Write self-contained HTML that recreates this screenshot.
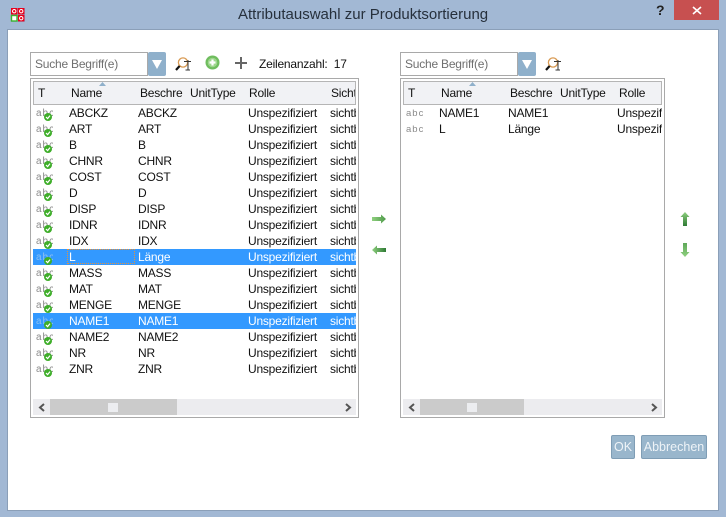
<!DOCTYPE html>
<html><head><meta charset="utf-8">
<style>
html,body{margin:0;padding:0}
body{width:726px;height:517px;position:relative;overflow:hidden;background:#a2b8d4;font-family:"Liberation Sans",sans-serif;font-size:12px;letter-spacing:-.22px;color:#111}
div,svg,span{position:absolute}
.abs{white-space:nowrap;line-height:16px}
.client{left:7px;top:29px;width:710px;height:480px;background:#fff;border:1px solid #8b9fb8}
.search{height:22px;width:116px;background:#fff;border:1px solid #a9a9a9;color:#6f6f6f;line-height:22px;text-indent:4px;top:52px}
.drop{top:52px;width:18px;height:24px;background:#8fb0cb;border-radius:2px}
.drop i{position:absolute;left:4px;top:8px;width:0;height:0;border-left:5.5px solid transparent;border-right:5.5px solid transparent;border-top:9px solid #fff}
.tbl{top:78px;height:338px;border:1px solid #a9a9a9;background:#fff;overflow:hidden}
.hdr{left:2px;top:2px;height:22px;background:#f1f2f5;border:1px solid #b5b5b5}
.h{top:3px;line-height:16px;white-space:nowrap;color:#111}
.row{left:2px;height:16px;overflow:hidden}
.sel{background:#3399ff;color:#fff}
.c{top:0;line-height:16px;white-space:nowrap}
.sb{left:2px;top:320px;height:16px;background:#ececef}
.thumb{top:0;height:16px;background:#cbcbcb}
.grip{top:4px;width:10px;height:9px;background:#ecedf0}
.btn{top:435px;height:22px;background:#99b6cc;border:1px solid #7f9db5;border-radius:2px;color:#eef3f7;text-align:center;line-height:22px;font-size:12.500px;letter-spacing:0}
.ic{left:3px;top:2px;width:17px;height:14px}
</style></head><body>

<svg style="left:10px;top:7px" width="16" height="16" viewBox="0 0 16 16"><rect x="1" y="1" width="14" height="14" fill="#6db1dc" opacity=".5"/><rect x="1" y="1" width="6.500" height="6.500" fill="#e8001c"/><rect x="8" y="1" width="6.500" height="6.500" fill="#e8001c"/><rect x="8" y="8" width="6.500" height="6.500" fill="#e8001c"/><rect x="1.500" y="8.500" width="5.500" height="5.500" fill="#fff" stroke="#3fb22c" stroke-width="1.400"/><circle cx="4.200" cy="4.200" r="1.700" fill="none" stroke="#fff"/><circle cx="11.200" cy="4.200" r="1.700" fill="none" stroke="#fff"/><circle cx="11.200" cy="11.200" r="1.700" fill="none" stroke="#fff"/></svg>
<div class="abs" style="left:238px;top:7px;font-size:15px;letter-spacing:0;color:#26303c">Attributauswahl zur Produktsortierung</div>
<div class="abs" style="left:656px;top:2px;font-size:14px;letter-spacing:0;font-weight:bold;color:#222">?</div>
<div style="left:674px;top:0;width:45px;height:20px;background:#c75050"></div>
<svg style="left:692px;top:6px" width="10" height="9"><path d="M1 1L9 8M9 1L1 8" stroke="#fff" stroke-width="1.600"/></svg>
<div class="client"></div>

<!-- left toolbar -->
<div class="search" style="left:30px">Suche Begriff(e)</div>
<div class="drop" style="left:148px"><i></i></div>
<svg style="left:175px;top:56px" width="17" height="16" viewBox="0 0 17 16"><circle cx="8" cy="6.500" r="4.600" fill="#fff" stroke="#d99a52" stroke-width="1.300"/><path d="M4.600 10L1 14" stroke="#111" stroke-width="2.200"/><path d="M9 5.500H16M13 4V14M10.500 14H15" stroke="#333" stroke-width="1" fill="none"/></svg>
<svg style="left:205px;top:55px" width="15" height="15" viewBox="0 0 15 15"><circle cx="7.500" cy="7.500" r="7" fill="#6fbd5e"/><circle cx="7.500" cy="7.500" r="4.800" fill="#9ed68d"/><path d="M7.500 4.500V10.500M4.500 7.500H10.500" stroke="#fff" stroke-width="2.200"/></svg>
<svg style="left:234px;top:56px" width="14" height="14"><path d="M7 1V13M1 7H13" stroke="#666" stroke-width="2"/></svg>
<div class="abs" style="left:259px;top:56px">Zeilenanzahl:&nbsp; 17</div>

<!-- left table -->
<div class="tbl" style="left:30px;width:327px">
<div class="hdr" style="width:321px">
<div class="h" style="left:4px">T</div><div class="h" style="left:37px">Name</div>
<svg style="left:65px;top:0" width="7" height="4"><path d="M0 4L3.500 0L7 4Z" fill="#8fb0cb"/></svg>
<div class="h" style="left:106px">Beschre</div><div class="h" style="left:156px">UnitType</div><div class="h" style="left:215px">Rolle</div>
<div class="h" style="left:297px;width:24px;overflow:hidden">Sichtbar</div>
</div>

<div class="row" style="top:26px;width:323px"><svg class="ic" viewBox="0 0 17 14"><text x="0" y="9" font-size="10" fill="#8a8a8a" font-family="Liberation Sans" letter-spacing="1">abc</text><circle cx="12" cy="10" r="4" fill="#3fae2a"/><path d="M10 10l1.600 1.600L14 8.600" stroke="#fff" fill="none" stroke-width="1.200"/></svg><div class="c" style="left:36px">ABCKZ</div><div class="c" style="left:105px">ABCKZ</div><div class="c" style="left:215px">Unspezifiziert</div><div class="c" style="left:297px;width:26px;overflow:hidden">sichtbar</div></div>
<div class="row" style="top:42px;width:323px"><svg class="ic" viewBox="0 0 17 14"><text x="0" y="9" font-size="10" fill="#8a8a8a" font-family="Liberation Sans" letter-spacing="1">abc</text><circle cx="12" cy="10" r="4" fill="#3fae2a"/><path d="M10 10l1.600 1.600L14 8.600" stroke="#fff" fill="none" stroke-width="1.200"/></svg><div class="c" style="left:36px">ART</div><div class="c" style="left:105px">ART</div><div class="c" style="left:215px">Unspezifiziert</div><div class="c" style="left:297px;width:26px;overflow:hidden">sichtbar</div></div>
<div class="row" style="top:58px;width:323px"><svg class="ic" viewBox="0 0 17 14"><text x="0" y="9" font-size="10" fill="#8a8a8a" font-family="Liberation Sans" letter-spacing="1">abc</text><circle cx="12" cy="10" r="4" fill="#3fae2a"/><path d="M10 10l1.600 1.600L14 8.600" stroke="#fff" fill="none" stroke-width="1.200"/></svg><div class="c" style="left:36px">B</div><div class="c" style="left:105px">B</div><div class="c" style="left:215px">Unspezifiziert</div><div class="c" style="left:297px;width:26px;overflow:hidden">sichtbar</div></div>
<div class="row" style="top:74px;width:323px"><svg class="ic" viewBox="0 0 17 14"><text x="0" y="9" font-size="10" fill="#8a8a8a" font-family="Liberation Sans" letter-spacing="1">abc</text><circle cx="12" cy="10" r="4" fill="#3fae2a"/><path d="M10 10l1.600 1.600L14 8.600" stroke="#fff" fill="none" stroke-width="1.200"/></svg><div class="c" style="left:36px">CHNR</div><div class="c" style="left:105px">CHNR</div><div class="c" style="left:215px">Unspezifiziert</div><div class="c" style="left:297px;width:26px;overflow:hidden">sichtbar</div></div>
<div class="row" style="top:90px;width:323px"><svg class="ic" viewBox="0 0 17 14"><text x="0" y="9" font-size="10" fill="#8a8a8a" font-family="Liberation Sans" letter-spacing="1">abc</text><circle cx="12" cy="10" r="4" fill="#3fae2a"/><path d="M10 10l1.600 1.600L14 8.600" stroke="#fff" fill="none" stroke-width="1.200"/></svg><div class="c" style="left:36px">COST</div><div class="c" style="left:105px">COST</div><div class="c" style="left:215px">Unspezifiziert</div><div class="c" style="left:297px;width:26px;overflow:hidden">sichtbar</div></div>
<div class="row" style="top:106px;width:323px"><svg class="ic" viewBox="0 0 17 14"><text x="0" y="9" font-size="10" fill="#8a8a8a" font-family="Liberation Sans" letter-spacing="1">abc</text><circle cx="12" cy="10" r="4" fill="#3fae2a"/><path d="M10 10l1.600 1.600L14 8.600" stroke="#fff" fill="none" stroke-width="1.200"/></svg><div class="c" style="left:36px">D</div><div class="c" style="left:105px">D</div><div class="c" style="left:215px">Unspezifiziert</div><div class="c" style="left:297px;width:26px;overflow:hidden">sichtbar</div></div>
<div class="row" style="top:122px;width:323px"><svg class="ic" viewBox="0 0 17 14"><text x="0" y="9" font-size="10" fill="#8a8a8a" font-family="Liberation Sans" letter-spacing="1">abc</text><circle cx="12" cy="10" r="4" fill="#3fae2a"/><path d="M10 10l1.600 1.600L14 8.600" stroke="#fff" fill="none" stroke-width="1.200"/></svg><div class="c" style="left:36px">DISP</div><div class="c" style="left:105px">DISP</div><div class="c" style="left:215px">Unspezifiziert</div><div class="c" style="left:297px;width:26px;overflow:hidden">sichtbar</div></div>
<div class="row" style="top:138px;width:323px"><svg class="ic" viewBox="0 0 17 14"><text x="0" y="9" font-size="10" fill="#8a8a8a" font-family="Liberation Sans" letter-spacing="1">abc</text><circle cx="12" cy="10" r="4" fill="#3fae2a"/><path d="M10 10l1.600 1.600L14 8.600" stroke="#fff" fill="none" stroke-width="1.200"/></svg><div class="c" style="left:36px">IDNR</div><div class="c" style="left:105px">IDNR</div><div class="c" style="left:215px">Unspezifiziert</div><div class="c" style="left:297px;width:26px;overflow:hidden">sichtbar</div></div>
<div class="row" style="top:154px;width:323px"><svg class="ic" viewBox="0 0 17 14"><text x="0" y="9" font-size="10" fill="#8a8a8a" font-family="Liberation Sans" letter-spacing="1">abc</text><circle cx="12" cy="10" r="4" fill="#3fae2a"/><path d="M10 10l1.600 1.600L14 8.600" stroke="#fff" fill="none" stroke-width="1.200"/></svg><div class="c" style="left:36px">IDX</div><div class="c" style="left:105px">IDX</div><div class="c" style="left:215px">Unspezifiziert</div><div class="c" style="left:297px;width:26px;overflow:hidden">sichtbar</div></div>
<div class="row sel" style="top:170px;width:323px"><svg class="ic" viewBox="0 0 17 14"><text x="0" y="9" font-size="10" fill="#8cc0f0" font-family="Liberation Sans" letter-spacing="1">abc</text><circle cx="12" cy="10" r="4" fill="#3fae2a"/><path d="M10 10l1.600 1.600L14 8.600" stroke="#fff" fill="none" stroke-width="1.200"/></svg><div style="left:34px;top:0;width:66px;height:13px;border:1px dotted #e8923a"></div><div class="c" style="left:36px">L</div><div class="c" style="left:105px">Länge</div><div class="c" style="left:215px">Unspezifiziert</div><div class="c" style="left:297px;width:26px;overflow:hidden">sichtbar</div></div>
<div class="row" style="top:186px;width:323px"><svg class="ic" viewBox="0 0 17 14"><text x="0" y="9" font-size="10" fill="#8a8a8a" font-family="Liberation Sans" letter-spacing="1">abc</text><circle cx="12" cy="10" r="4" fill="#3fae2a"/><path d="M10 10l1.600 1.600L14 8.600" stroke="#fff" fill="none" stroke-width="1.200"/></svg><div class="c" style="left:36px">MASS</div><div class="c" style="left:105px">MASS</div><div class="c" style="left:215px">Unspezifiziert</div><div class="c" style="left:297px;width:26px;overflow:hidden">sichtbar</div></div>
<div class="row" style="top:202px;width:323px"><svg class="ic" viewBox="0 0 17 14"><text x="0" y="9" font-size="10" fill="#8a8a8a" font-family="Liberation Sans" letter-spacing="1">abc</text><circle cx="12" cy="10" r="4" fill="#3fae2a"/><path d="M10 10l1.600 1.600L14 8.600" stroke="#fff" fill="none" stroke-width="1.200"/></svg><div class="c" style="left:36px">MAT</div><div class="c" style="left:105px">MAT</div><div class="c" style="left:215px">Unspezifiziert</div><div class="c" style="left:297px;width:26px;overflow:hidden">sichtbar</div></div>
<div class="row" style="top:218px;width:323px"><svg class="ic" viewBox="0 0 17 14"><text x="0" y="9" font-size="10" fill="#8a8a8a" font-family="Liberation Sans" letter-spacing="1">abc</text><circle cx="12" cy="10" r="4" fill="#3fae2a"/><path d="M10 10l1.600 1.600L14 8.600" stroke="#fff" fill="none" stroke-width="1.200"/></svg><div class="c" style="left:36px">MENGE</div><div class="c" style="left:105px">MENGE</div><div class="c" style="left:215px">Unspezifiziert</div><div class="c" style="left:297px;width:26px;overflow:hidden">sichtbar</div></div>
<div class="row sel" style="top:234px;width:323px"><svg class="ic" viewBox="0 0 17 14"><text x="0" y="9" font-size="10" fill="#8cc0f0" font-family="Liberation Sans" letter-spacing="1">abc</text><circle cx="12" cy="10" r="4" fill="#3fae2a"/><path d="M10 10l1.600 1.600L14 8.600" stroke="#fff" fill="none" stroke-width="1.200"/></svg><div class="c" style="left:36px">NAME1</div><div class="c" style="left:105px">NAME1</div><div class="c" style="left:215px">Unspezifiziert</div><div class="c" style="left:297px;width:26px;overflow:hidden">sichtbar</div></div>
<div class="row" style="top:250px;width:323px"><svg class="ic" viewBox="0 0 17 14"><text x="0" y="9" font-size="10" fill="#8a8a8a" font-family="Liberation Sans" letter-spacing="1">abc</text><circle cx="12" cy="10" r="4" fill="#3fae2a"/><path d="M10 10l1.600 1.600L14 8.600" stroke="#fff" fill="none" stroke-width="1.200"/></svg><div class="c" style="left:36px">NAME2</div><div class="c" style="left:105px">NAME2</div><div class="c" style="left:215px">Unspezifiziert</div><div class="c" style="left:297px;width:26px;overflow:hidden">sichtbar</div></div>
<div class="row" style="top:266px;width:323px"><svg class="ic" viewBox="0 0 17 14"><text x="0" y="9" font-size="10" fill="#8a8a8a" font-family="Liberation Sans" letter-spacing="1">abc</text><circle cx="12" cy="10" r="4" fill="#3fae2a"/><path d="M10 10l1.600 1.600L14 8.600" stroke="#fff" fill="none" stroke-width="1.200"/></svg><div class="c" style="left:36px">NR</div><div class="c" style="left:105px">NR</div><div class="c" style="left:215px">Unspezifiziert</div><div class="c" style="left:297px;width:26px;overflow:hidden">sichtbar</div></div>
<div class="row" style="top:282px;width:323px"><svg class="ic" viewBox="0 0 17 14"><text x="0" y="9" font-size="10" fill="#8a8a8a" font-family="Liberation Sans" letter-spacing="1">abc</text><circle cx="12" cy="10" r="4" fill="#3fae2a"/><path d="M10 10l1.600 1.600L14 8.600" stroke="#fff" fill="none" stroke-width="1.200"/></svg><div class="c" style="left:36px">ZNR</div><div class="c" style="left:105px">ZNR</div><div class="c" style="left:215px">Unspezifiziert</div><div class="c" style="left:297px;width:26px;overflow:hidden">sichtbar</div></div>

<div class="sb" style="width:323px"><svg style="left:5px;top:4px" width="8" height="9"><path d="M6 1L2 4.500L6 8" stroke="#555" stroke-width="2" fill="none"/></svg><div class="thumb" style="left:17px;width:127px"></div><div class="grip" style="left:75px"></div><svg style="left:311px;top:4px" width="8" height="9"><path d="M2 1L6 4.500L2 8" stroke="#555" stroke-width="2" fill="none"/></svg></div>
</div>

<!-- middle arrows -->
<svg style="left:372px;top:214px" width="15" height="10"><defs><linearGradient id="gr" x1="0" x2="1" y1="0" y2="0"><stop offset="0" stop-color="#8fd07f"/><stop offset="1" stop-color="#4f9a4a"/></linearGradient><linearGradient id="gl" x1="0" x2="1" y1="0" y2="0"><stop offset="0" stop-color="#8fd07f"/><stop offset="1" stop-color="#2f7a35"/></linearGradient><linearGradient id="gu" x1="0" x2="0" y1="0" y2="1"><stop offset="0" stop-color="#8fd07f"/><stop offset="1" stop-color="#2f7a35"/></linearGradient><linearGradient id="gd" x1="0" x2="0" y1="0" y2="1"><stop offset="0" stop-color="#5fa85a"/><stop offset="1" stop-color="#8fd07f"/></linearGradient></defs><path d="M0 3H9V.5L14 5L9 9.500V7H0Z" fill="url(#gr)"/></svg>
<svg style="left:372px;top:245px" width="15" height="10"><path d="M14 3H5V.5L0 5L5 9.500V7H14Z" fill="url(#gl)"/></svg>

<!-- right toolbar -->
<div class="search" style="left:400px">Suche Begriff(e)</div>
<div class="drop" style="left:518px"><i></i></div>
<svg style="left:545px;top:56px" width="17" height="16" viewBox="0 0 17 16"><circle cx="8" cy="6.500" r="4.600" fill="#fff" stroke="#d99a52" stroke-width="1.300"/><path d="M4.600 10L1 14" stroke="#111" stroke-width="2.200"/><path d="M9 5.500H16M13 4V14M10.500 14H15" stroke="#333" stroke-width="1" fill="none"/></svg>

<!-- right table -->
<div class="tbl" style="left:400px;width:263px">
<div class="hdr" style="width:257px">
<div class="h" style="left:4px">T</div><div class="h" style="left:37px">Name</div>
<svg style="left:65px;top:0" width="7" height="4"><path d="M0 4L3.500 0L7 4Z" fill="#8fb0cb"/></svg>
<div class="h" style="left:106px">Beschre</div><div class="h" style="left:156px">UnitType</div><div class="h" style="left:215px">Rolle</div>
</div>
<div class="row" style="top:26px;width:259px"><svg class="ic" viewBox="0 0 17 14"><text x="0" y="9" font-size="9.500" fill="#8a8a8a" font-family="Liberation Sans" letter-spacing="1">abc</text></svg><div class="c" style="left:36px">NAME1</div><div class="c" style="left:105px">NAME1</div><div class="c" style="left:214px;width:45px;overflow:hidden">Unspezifiziert</div></div>
<div class="row" style="top:42px;width:259px"><svg class="ic" viewBox="0 0 17 14"><text x="0" y="9" font-size="9.500" fill="#8a8a8a" font-family="Liberation Sans" letter-spacing="1">abc</text></svg><div class="c" style="left:36px">L</div><div class="c" style="left:105px">Länge</div><div class="c" style="left:214px;width:45px;overflow:hidden">Unspezifiziert</div></div>
<div class="sb" style="width:259px"><svg style="left:5px;top:4px" width="8" height="9"><path d="M6 1L2 4.500L6 8" stroke="#555" stroke-width="2" fill="none"/></svg><div class="thumb" style="left:17px;width:104px"></div><div class="grip" style="left:64px"></div><svg style="left:247px;top:4px" width="8" height="9"><path d="M2 1L6 4.500L2 8" stroke="#555" stroke-width="2" fill="none"/></svg></div>
</div>

<!-- right arrows -->
<svg style="left:680px;top:212px" width="10" height="15"><path d="M3 14V5H.5L5 0L9.500 5H7V14Z" fill="url(#gu)"/></svg>
<svg style="left:680px;top:243px" width="10" height="15"><path d="M3 0V9H.5L5 14L9.500 9H7V0Z" fill="url(#gd)"/></svg>

<div class="btn" style="left:611px;width:22px">OK</div>
<div class="btn" style="left:641px;width:64px">Abbrechen</div>
</body></html>
